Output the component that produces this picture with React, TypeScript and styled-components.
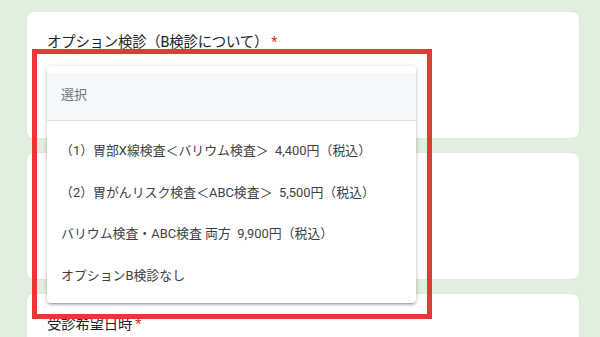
import styled, { createGlobalStyle } from 'styled-components'

const Global = createGlobalStyle`
  html, body {
    margin: 0;
    padding: 0;
    background: #e0efde;
    overflow: hidden;
  }
  * { box-sizing: border-box; }
`

const Page = styled.div`
  position: relative;
  width: 600px;
  height: 337px;
  overflow: hidden;
  padding: 11px 20px 0 26px;
  display: flex;
  flex-direction: column;
  gap: 13px;
  font-family: Roboto, "Noto Sans CJK JP", sans-serif;
`

const Card = styled.div`
  position: relative;
  flex: none;
  height: 128px;
  background: #fff;
  border: 1px solid #e3e6e3;
  border-radius: 8px;
  padding: 22px 0 0 20px;
`

const Question = styled.div`
  font-size: 14.4px;
  line-height: 18px;
  color: #202124;
  letter-spacing: -0.2px;
`

const Required = styled.span`
  color: #d93025;
  margin-left: 3px;
`

const Menu = styled.div`
  position: absolute;
  left: 20px;
  top: 54px;
  width: 369px;
  height: 237px;
  z-index: 2;
  background: #fff;
  border-radius: 4px;
  padding: 7px 0 8px;
  box-shadow: 0 2px 2px rgba(0, 0, 0, 0.14), 0 3px 1px -2px rgba(0, 0, 0, 0.12),
    0 1px 5px rgba(0, 0, 0, 0.2);
`

const Placeholder = styled.div`
  height: 48px;
  display: flex;
  align-items: center;
  padding: 0 0 6px 14px;
  background: #f4f7fb;
  border-bottom: 1px solid #e0e0e0;
  color: #70757a;
  font-size: 13px;
  margin-bottom: 8px;
`

const Option = styled.div<{ $indent?: boolean }>`
  height: 41.5px;
  display: flex;
  align-items: center;
  padding-left: ${(p) => (p.$indent ? 13 : 14)}px;
  color: #3c4043;
  font-size: 12.9px;
  white-space: pre;
`

const Highlight = styled.div`
  position: absolute;
  left: 32px;
  top: 49px;
  width: 400px;
  height: 270px;
  border: 5px solid #e53935;
  z-index: 3;
  pointer-events: none;
`

const options = [
  '（1）胃部X線検査＜バリウム検査＞  4,400円（税込）',
  '（2）胃がんリスク検査＜ABC検査＞  5,500円（税込）',
  'バリウム検査・ABC検査 両方  9,900円（税込）',
  'オプションB検診なし',
]

export default function App() {
  return (
    <>
      <Global />
      <Page>
        <Card>
          <Question>
            オプション検診（B検診について）<Required>*</Required>
          </Question>
          <Menu>
            <Placeholder>選択</Placeholder>
            {options.map((o, i) => (
              <Option key={o} $indent={i < 2}>
                {o}
              </Option>
            ))}
          </Menu>
        </Card>
        <Card />
        <Card>
          <Question>
            受診希望日時<Required>*</Required>
          </Question>
        </Card>
        <Highlight />
      </Page>
    </>
  )
}
